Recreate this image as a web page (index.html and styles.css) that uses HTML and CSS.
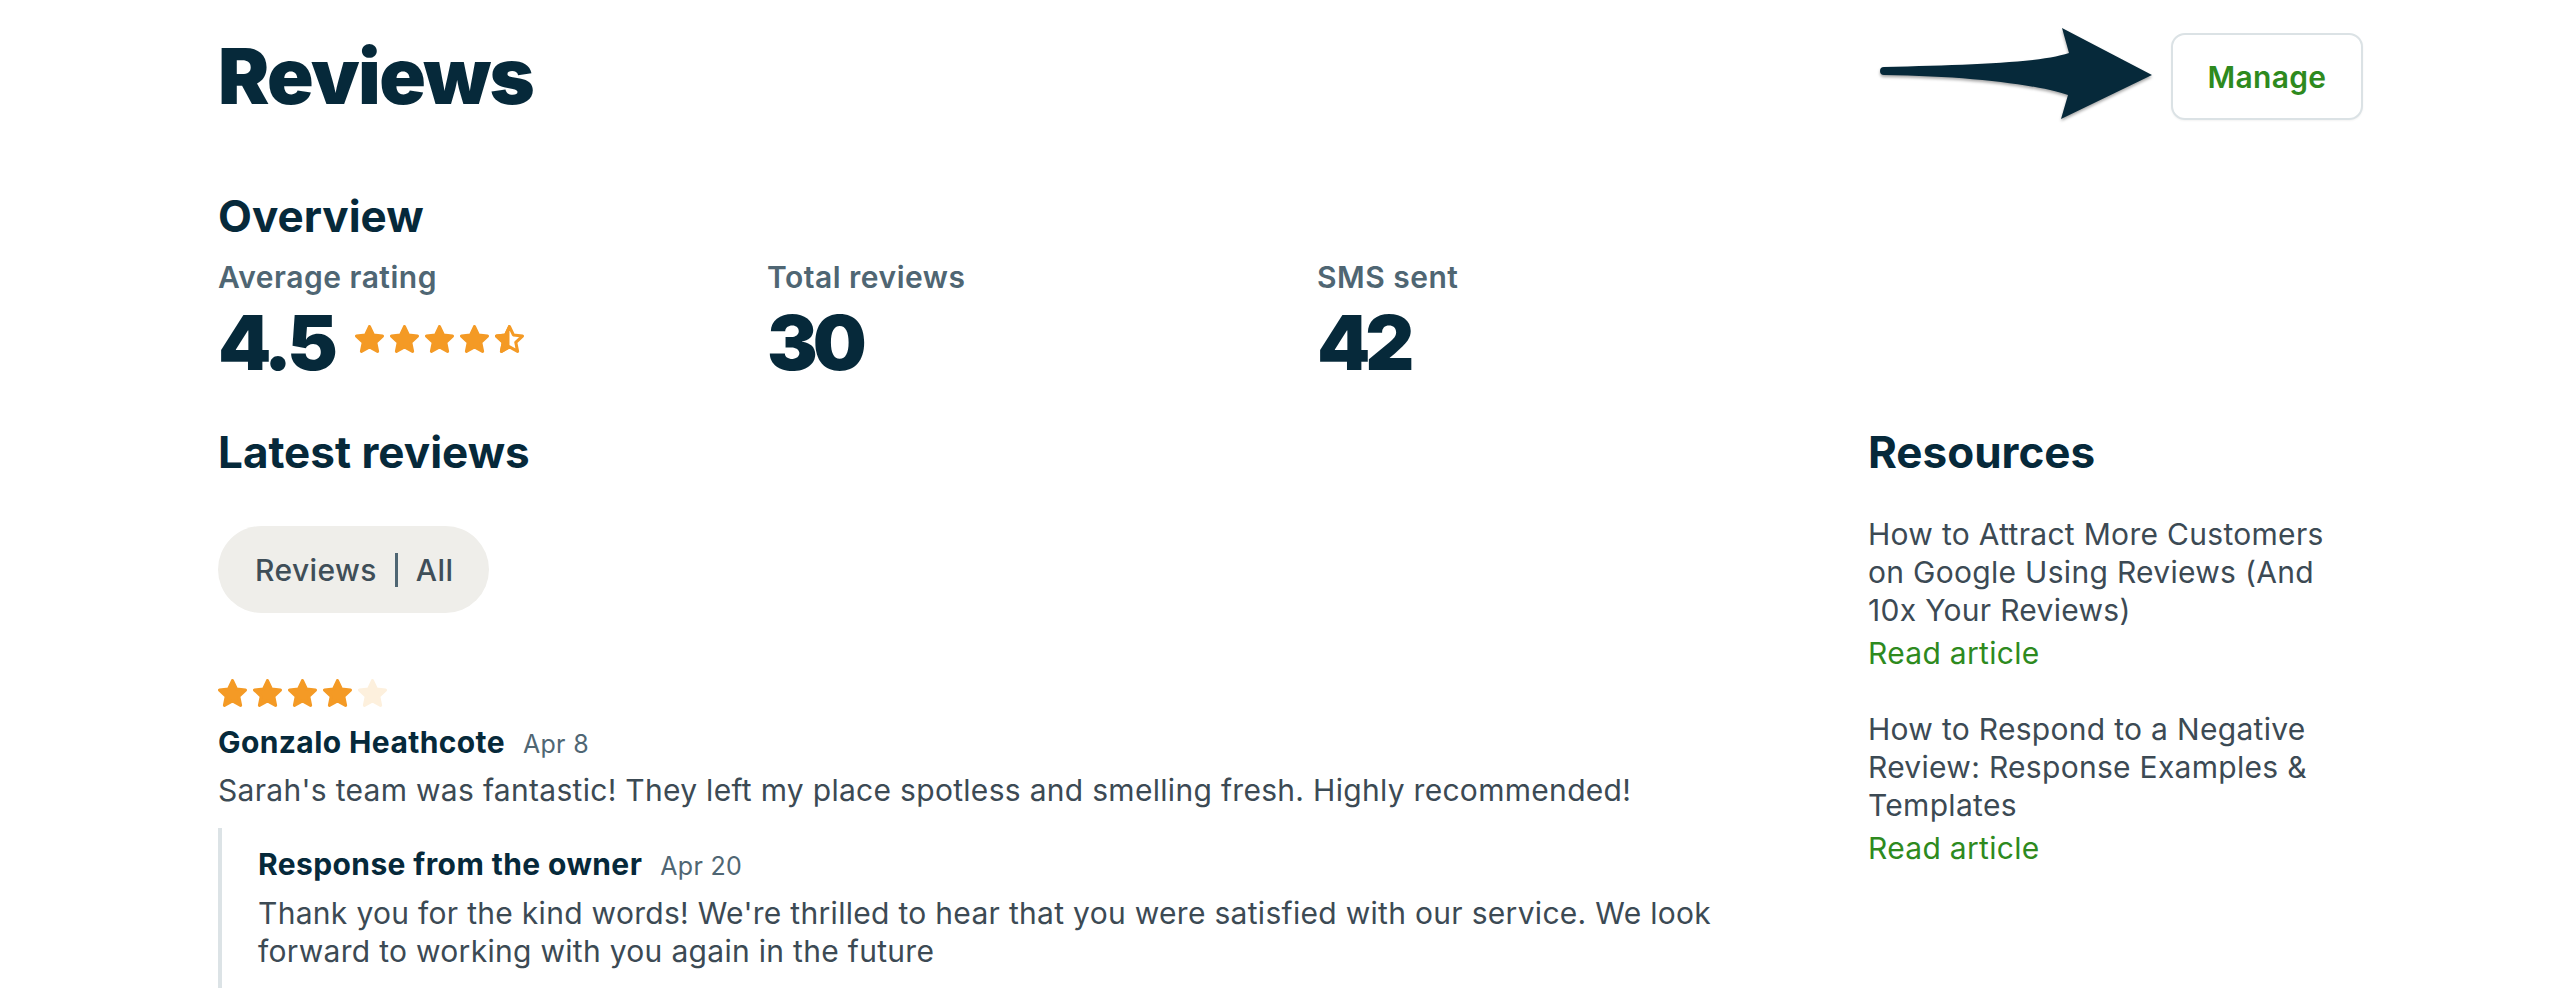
FILE: index.html
```html
<!DOCTYPE html>
<html lang="en">
<head>
<meta charset="utf-8">
<title>Reviews</title>
<link rel="stylesheet" href="styles.css">
</head>
<body>
<svg class="defs" width="0" height="0" aria-hidden="true">
  <defs>
    <symbol id="star" viewBox="1.6 1.5 20.8 20.8">
      <path d="M12 2.6l2.8 6 6.5.8-4.8 4.5 1.3 6.5L12 17.2l-5.8 3.2 1.3-6.5L2.7 9.4l6.5-.8z" stroke-linejoin="round" stroke-width="2.2"/>
    </symbol>
    <clipPath id="lefthalf"><rect x="0" y="0" width="12" height="24"/></clipPath>
  </defs>
</svg>
<div class="page">
  <header class="top">
    <h1 class="title">Reviews</h1>
    <div class="actions">
      <svg class="arrow" width="276" height="96" viewBox="0 0 276 96" aria-hidden="true">
        <path d="M5 41 C 90 39, 160 37, 190 27 L 183 2 L 273 49 L 182 93 L 189 69 C 160 59, 90 50, 5 49 A 4 4 0 0 1 5 41 Z"/>
      </svg>
      <button class="manage">Manage</button>
    </div>
  </header>

  <section class="overview">
    <h2 class="heading">Overview</h2>
    <div class="stats">
      <div class="stat">
        <div class="stat-label">Average rating</div>
        <div class="stat-row">
          <span class="stat-value">4.5</span>
          <span class="stars big">
            <svg class="star"><use href="#star"/></svg>
            <svg class="star"><use href="#star"/></svg>
            <svg class="star"><use href="#star"/></svg>
            <svg class="star"><use href="#star"/></svg>
            <svg class="star half" viewBox="1.6 1.5 20.8 20.8"><use href="#star" class="outline" x="1.6" y="1.5" width="20.8" height="20.8"/><g clip-path="url(#lefthalf)"><use href="#star" x="1.6" y="1.5" width="20.8" height="20.8"/></g></svg>
          </span>
        </div>
      </div>
      <div class="stat">
        <div class="stat-label">Total reviews</div>
        <div class="stat-row"><span class="stat-value">30</span></div>
      </div>
      <div class="stat">
        <div class="stat-label">SMS sent</div>
        <div class="stat-row"><span class="stat-value">42</span></div>
      </div>
    </div>
  </section>

  <div class="main">
    <section class="latest">
      <h2 class="heading">Latest reviews</h2>
      <div class="pill">
        <span>Reviews</span>
        <span class="pill-sep"></span>
        <span>All</span>
      </div>

      <article class="review">
        <div class="stars">
          <svg class="star"><use href="#star"/></svg>
          <svg class="star"><use href="#star"/></svg>
          <svg class="star"><use href="#star"/></svg>
          <svg class="star"><use href="#star"/></svg>
          <svg class="star empty"><use href="#star"/></svg>
        </div>
        <div class="review-head">
          <span class="review-name">Gonzalo Heathcote</span>
          <span class="review-date">Apr 8</span>
        </div>
        <p class="review-text">Sarah's team was fantastic! They left my place spotless and smelling fresh. Highly recommended!</p>
        <div class="response">
          <div class="review-head">
            <span class="review-name">Response from the owner</span>
            <span class="review-date">Apr 20</span>
          </div>
          <p class="review-text">Thank you for the kind words! We're thrilled to hear that you were satisfied with our service. We look forward to working with you again in the future</p>
        </div>
      </article>
    </section>

    <aside class="resources">
      <h2 class="heading">Resources</h2>
      <div class="article">
        <p class="article-title">How to Attract More Customers on Google Using Reviews (And 10x Your Reviews)</p>
        <a class="article-link" href="#">Read article</a>
      </div>
      <div class="article">
        <p class="article-title">How to Respond to a Negative Review: Response Examples &amp; Templates</p>
        <a class="article-link" href="#">Read article</a>
      </div>
    </aside>
  </div>
</div>
</body>
</html>
```

FILE: styles.css
```css
* { box-sizing: border-box; }

html, body {
  margin: 0;
  padding: 0;
  background: #ffffff;
}

body {
  font-family: Inter, "Noto Sans", "Liberation Sans", sans-serif;
  color: #3c4a54;
  font-size: 30px;
  line-height: 38px;
  letter-spacing: 0.3px;
}

.defs { position: absolute; width: 0; height: 0; overflow: hidden; }

.page {
  padding: 33px 187px 0 218px;
}

/* Header */
.top {
  display: flex;
  align-items: center;
  justify-content: space-between;
  height: 87px;
}

.title {
  margin: 0;
  font-size: 77px;
  line-height: 1;
  font-weight: 900;
  color: #06293a;
  letter-spacing: -1.6px;
}

.actions {
  display: flex;
  align-items: center;
  gap: 16px;
}

.arrow {
  display: block;
  margin-bottom: 5px;
  fill: #06293a;
  filter: drop-shadow(0 2px 1.5px rgba(0, 0, 0, 0.35));
}

.manage {
  width: 192px;
  height: 87px;
  border: 2px solid #dbe2e5;
  border-radius: 14px;
  background: #ffffff;
  color: #2e8a1e;
  font-family: Inter, "Noto Sans", sans-serif;
  font-size: 30px;
  font-weight: 600;
  letter-spacing: 0.3px;
  box-shadow: 0 1px 2px rgba(0, 0, 0, 0.05);
}

/* Headings */
.heading {
  margin: 0;
  font-size: 44px;
  line-height: 53px;
  font-weight: 700;
  color: #06293a;
  letter-spacing: 0;
}

/* Overview */
.overview {
  margin-top: 70px;
}

.stats {
  display: grid;
  grid-template-columns: 549px 550px 549px;
  margin-top: 15px;
}

.stat-label {
  font-weight: 600;
  color: #4f6673;
  line-height: 38px;
  letter-spacing: 0.5px;
}

.stat-row {
  display: flex;
  align-items: center;
  gap: 20px;
  margin-top: 8px;
  height: 76px;
}

.stat-value {
  font-size: 76px;
  line-height: 76px;
  font-weight: 900;
  color: #06293a;
  letter-spacing: -5px;
}

.stars {
  display: flex;
  gap: 6px;
  fill: #f49a25;
  stroke: #f49a25;
}

.stars.big {
  margin-top: -6px;
  margin-left: 2px;
}

.star {
  width: 29px;
  height: 29px;
  display: block;
  overflow: visible;
}

.star.half .outline {
  fill: #ffffff;
}

.star.empty {
  fill: #fdf0dd;
  stroke: #fdf0dd;
}

/* Main grid */
.main {
  display: grid;
  grid-template-columns: 1fr 495px;
  column-gap: 98px;
  margin-top: 46px;
}

.pill {
  display: inline-flex;
  align-items: center;
  gap: 18px;
  height: 87px;
  margin-top: 47px;
  padding: 0 36px 0 37px;
  border-radius: 44px;
  background: #efeeea;
  color: #3f4e58;
  font-size: 30px;
  font-weight: 500;
  letter-spacing: 0.4px;
}

.pill-sep {
  width: 3px;
  height: 34px;
  background: #4f6673;
}

.review {
  margin-top: 66px;
}

.review-head {
  display: flex;
  align-items: baseline;
  gap: 18px;
  margin-top: 15px;
}

.review-name {
  font-weight: 700;
  color: #06293a;
  font-size: 30px;
  letter-spacing: 0.4px;
}

.review-date {
  font-size: 25px;
  color: #4f6673;
  letter-spacing: 0.3px;
}

.review-text {
  margin: 8px 0 0;
}

.response {
  margin-top: 19px;
  border-left: 4px solid #dce3e6;
  padding: 2px 0 40px 36px;
}

.response .review-head {
  margin-top: 15px;
}

.response .review-text {
  margin-top: 9px;
}

/* Resources */
.resources .article {
  margin-top: 36px;
}

.resources .article + .article {
  margin-top: 38px;
}

.article-title {
  margin: 0;
}

.article-link {
  display: block;
  margin-top: 5px;
  color: #2e8a1e;
  text-decoration: none;
}
```
